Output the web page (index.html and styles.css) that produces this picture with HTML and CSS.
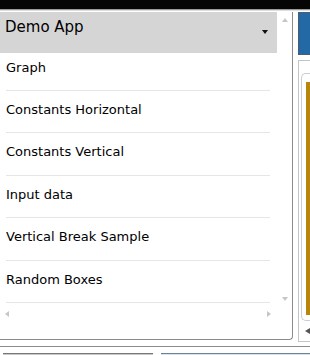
FILE: index.html
```html
<!DOCTYPE html>
<html lang="en">
  <head>
    <meta charset="UTF-8" />
    <meta name="viewport" content="width=device-width, initial-scale=1.0" />
    <title>Demo App</title>
    <link rel="stylesheet" href="styles.css">
  </head>
  <body>
    <div class="titlebar"></div>
    <div class="titlebar-edge"></div>

    <div class="workspace">
      <!-- App menu panel -->
      <div class="panel">
        <div class="panel-main">
          <div class="list-col">
            <div class="app-header">
              <span class="app-title">Demo App</span>
              <span class="caret"></span>
            </div>
            <ul class="menu">
              <li>Graph</li>
              <li>Constants Horizontal</li>
              <li>Constants Vertical</li>
              <li>Input data</li>
              <li>Vertical Break Sample</li>
              <li>Random Boxes</li>
            </ul>
          </div>
          <div class="vscroll">
            <span class="arrow up"></span>
            <span class="arrow down"></span>
          </div>
        </div>
        <div class="hscroll">
          <span class="arrow left"></span>
          <span class="arrow right"></span>
        </div>
      </div>

      <!-- Side column (cut off) -->
      <div class="side">
        <div class="side-tab"></div>
        <div class="side-card">
          <div class="side-inner">
            <div class="gold-bar"></div>
          </div>
          <span class="arrow back"></span>
        </div>
      </div>
    </div>

    <div class="bottom-line"></div>
    <div class="tabs">
      <div class="tab tab-gray"></div>
      <div class="tab tab-blue"></div>
    </div>
  </body>
</html>
```

FILE: styles.css
```css
body {
  margin: 0;
  width: 310px;
  height: 355px;
  overflow: hidden;
  background: #fff;
  font-family: "DejaVu Sans", sans-serif;
  color: #000;
}

.titlebar {
  height: 9px;
  background: #050505;
}

.titlebar-edge {
  height: 1px;
  border-top: 1px solid #9a9a9a;
  background: #dedede;
}

.workspace {
  display: flex;
  align-items: flex-start;
  padding-top: 1px;
}

/* Menu panel */
.panel {
  box-sizing: border-box;
  width: 293px;
  height: 328px;
  border-right: 1px solid #8a8a8a;
  border-bottom: 1px solid #8a8a8a;
  border-bottom-right-radius: 4px;
  flex-shrink: 0;
}

.panel-main {
  display: flex;
  height: 294px;
}

.list-col {
  width: 277px;
  display: flex;
  flex-direction: column;
  overflow: hidden;
}

.app-header {
  display: flex;
  justify-content: space-between;
  align-items: flex-start;
  height: 41px;
  flex-shrink: 0;
  padding: 0 9px 0 5px;
  box-sizing: border-box;
  background: #d6d5d6;
}

.app-title {
  font-size: 15px;
  padding-top: 6px;
}

.caret {
  margin-top: 18px;
  width: 0;
  height: 0;
  border-left: 3.5px solid transparent;
  border-right: 3.5px solid transparent;
  border-top: 4px solid #111;
}

.menu {
  list-style: none;
  margin: 0;
  padding: 0;
}

.menu li {
  box-sizing: border-box;
  height: 42.4px;
  margin: 0 7px 0 6px;
  padding-top: 11px;
  font-size: 13px;
  line-height: 15px;
  border-bottom: 1px solid #e6e6e6;
}

.menu li:first-child {
  height: 38px;
  padding-top: 6.6px;
}

.vscroll {
  width: 15px;
  display: flex;
  flex-direction: column;
  justify-content: space-between;
  align-items: center;
  padding: 6px 0 5px;
  box-sizing: border-box;
}

.hscroll {
  width: 277px;
  height: 16px;
  display: flex;
  justify-content: space-between;
  align-items: center;
  padding: 0 6px 0 5px;
  box-sizing: border-box;
}

.arrow {
  width: 0;
  height: 0;
}

.arrow.up {
  border-left: 3.5px solid transparent;
  border-right: 3.5px solid transparent;
  border-bottom: 4px solid #c6c6c6;
}

.arrow.down {
  border-left: 3.5px solid transparent;
  border-right: 3.5px solid transparent;
  border-top: 4px solid #c6c6c6;
}

.arrow.left {
  border-top: 3px solid transparent;
  border-bottom: 3px solid transparent;
  border-right: 4px solid #c6c6c6;
}

.arrow.right {
  border-top: 3px solid transparent;
  border-bottom: 3px solid transparent;
  border-left: 4px solid #c6c6c6;
}

/* Side column */
.side {
  flex: 1;
  margin-left: 5px;
}

.side-tab {
  height: 43px;
  box-sizing: border-box;
  border: 1px solid #4b5d70;
  border-right: none;
  background: #2369a5;
}

.side-card {
  margin-top: 5px;
  height: 282px;
  box-sizing: border-box;
  border: 1px solid #c4c4c4;
  border-right: none;
}

.side-inner {
  margin: 12px 0 0 2px;
  height: 248px;
  box-sizing: border-box;
  border: 1px solid #c9cdd6;
  border-right: none;
  border-radius: 5px 0 0 5px;
  padding: 8px 0 0 4px;
}

.gold-bar {
  height: 233px;
  background: #b8860b;
}

.arrow.back {
  display: block;
  margin: 7px 0 0 6px;
  border-top: 3px solid transparent;
  border-bottom: 3px solid transparent;
  border-right: 5px solid #555;
}

/* Bottom strip */
.bottom-line {
  margin-top: 4px;
  height: 1px;
  background: #8c8c8c;
}

.tabs {
  display: flex;
  margin-top: 6px;
}

.tab {
  height: 6px;
  box-sizing: border-box;
}

.tab-gray {
  width: 150px;
  margin-left: 3px;
  border-top: 1px solid #777;
  background: #c8c8c8;
}

.tab-blue {
  flex: 1;
  margin-left: 8px;
  border-top: 1px solid #6e8296;
  background: #dbe1e8;
}
```
